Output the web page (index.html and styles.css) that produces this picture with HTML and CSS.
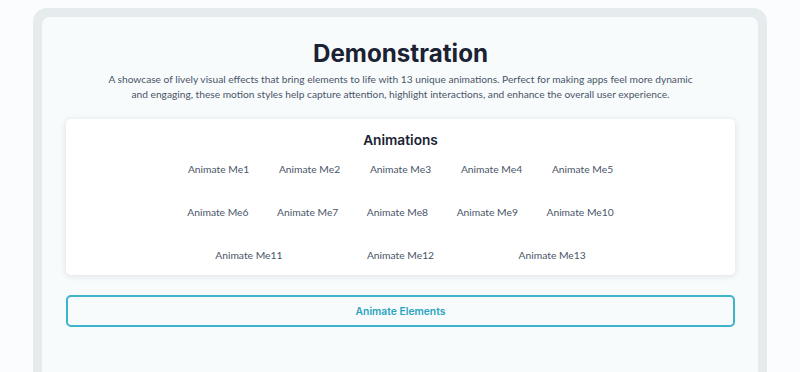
FILE: index.html
```html
<!DOCTYPE html>
<html lang="en">

<head>
  <meta charset="UTF-8">
  <meta name="viewport" content="width=device-width, initial-scale=1.0">
  <title>Demonstration</title>
  <link rel="stylesheet" href="styles.css">
</head>

<body>
  <div class="frame">
    <div class="panel">
      <h1>Demonstration</h1>
      <p class="intro">A showcase of lively visual effects that bring elements to life with 13 unique animations. Perfect for making apps feel more dynamic and engaging, these motion styles help capture attention, highlight interactions, and enhance the overall user experience.</p>

      <!-- Animation targets -->
      <div class="card">
        <h2>Animations</h2>
        <div class="items">
          <div class="row">
            <span class="item">Animate Me1</span>
            <span class="item">Animate Me2</span>
            <span class="item">Animate Me3</span>
            <span class="item">Animate Me4</span>
            <span class="item">Animate Me5</span>
          </div>
          <div class="row">
            <span class="item">Animate Me6</span>
            <span class="item">Animate Me7</span>
            <span class="item">Animate Me8</span>
            <span class="item">Animate Me9</span>
            <span class="item">Animate Me10</span>
          </div>
          <div class="row">
            <span class="item">Animate Me11</span>
            <span class="item">Animate Me12</span>
            <span class="item">Animate Me13</span>
          </div>
        </div>
      </div>

      <button class="button">Animate Elements</button>
    </div>
  </div>
</body>

</html>
```

FILE: styles.css
```css
body {
  margin: 0;
  padding: 0;
  background-color: #fbfcfd;
  font-family: 'Lato', sans-serif;
  height: 372px;
  overflow: hidden;
}

.frame {
  margin: 8px 33px 0;
  padding: 9px 9px 0;
  background-color: #e6ebee;
  border-radius: 14px 14px 0 0;
  height: 355px;
}

.panel {
  background-color: #f8fbfc;
  border-radius: 8px 8px 0 0;
  padding: 23px 23px 0 24px;
  height: 100%;
  box-sizing: border-box;
}

h1 {
  font-family: 'Inter', sans-serif;
  font-weight: 700;
  font-size: 24.2px;
  line-height: 28px;
  color: #1a2233;
  text-align: center;
  margin: 0 0 4px;
}

.intro {
  font-size: 10.2px;
  line-height: 15px;
  color: #4a5568;
  text-align: center;
  margin: 0 auto 17px;
  max-width: 600px;
}

.card {
  background-color: #ffffff;
  border-radius: 5px;
  box-shadow: 0 1px 6px rgba(20, 30, 50, 0.12);
  padding: 14px 0 8px;
  height: 156px;
  box-sizing: border-box;
}

h2 {
  font-family: 'Inter', sans-serif;
  font-weight: 600;
  font-size: 13.7px;
  line-height: 14px;
  color: #1a2233;
  text-align: center;
  margin: 0;
}

.items {
  width: 455px;
  margin: 0 auto;
}

.row {
  display: flex;
  justify-content: space-around;
  height: 43px;
  align-items: center;
}

.item {
  font-size: 10.3px;
  color: #4a5568;
}

.button {
  display: block;
  width: 100%;
  height: 32px;
  margin-top: 20px;
  background: transparent;
  border: 2px solid #3db3cc;
  border-radius: 5px;
  font-family: 'Inter', sans-serif;
  font-weight: 600;
  font-size: 10.3px;
  color: #2ba4c0;
  cursor: pointer;
}
```
